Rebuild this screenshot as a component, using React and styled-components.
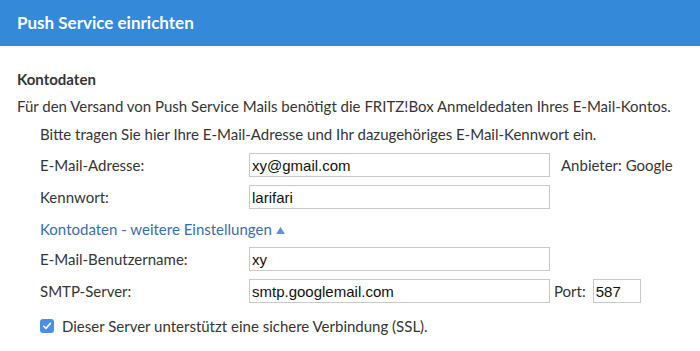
import React from "react";
import styled, { createGlobalStyle } from "styled-components";

const GlobalStyle = createGlobalStyle`
  body {
    margin: 0;
    background: #fff;
    font-family: "Lato", "Open Sans", sans-serif;
    color: #353535;
  }
`;

export default function App() {
  return (
    <>
      <GlobalStyle />
      <Page>
        <Header>Push Service einrichten</Header>
        <Content>
          <Title>Kontodaten</Title>
          <Text>
            Für den Versand von Push Service Mails benötigt die FRITZ!Box
            Anmeldedaten Ihres E-Mail-Kontos.
          </Text>
          <Indent>
            <Text>
              Bitte tragen Sie hier Ihre E-Mail-Adresse und Ihr dazugehöriges
              E-Mail-Kennwort ein.
            </Text>
            <Row>
              <Label>E-Mail-Adresse:</Label>
              <Input defaultValue="xy@gmail.com" />
              <After>Anbieter: Google</After>
            </Row>
            <Row>
              <Label>Kennwort:</Label>
              <Input defaultValue="larifari" />
            </Row>
            <Toggle>
              Kontodaten - weitere Einstellungen
              <Triangle viewBox="0 0 10 8">
                <path d="M5 0 L10 8 L0 8 Z" fill="#5b93d3" />
              </Triangle>
            </Toggle>
            <Row>
              <Label>E-Mail-Benutzername:</Label>
              <Input defaultValue="xy" />
            </Row>
            <Row>
              <Label>SMTP-Server:</Label>
              <Input defaultValue="smtp.googlemail.com" />
              <PortLabel>Port:</PortLabel>
              <Input $w={48} defaultValue="587" />
            </Row>
            <Check>
              <Box>
                <svg width="10" height="10" viewBox="0 0 10 10">
                  <path
                    d="M1.8 5.2 L4 7.4 L8.4 2.4"
                    fill="none"
                    stroke="#fff"
                    strokeWidth="1.6"
                    strokeLinecap="round"
                    strokeLinejoin="round"
                  />
                </svg>
              </Box>
              Dieser Server unterstützt eine sichere Verbindung (SSL).
            </Check>
          </Indent>
        </Content>
      </Page>
    </>
  );
}

/*===================== Styles =====================*/
const Page = styled.div`
  width: 700px;
  height: 351px;
  overflow: hidden;
`;

const Header = styled.div`
  height: 46px;
  background: #3589d9;
  color: #fff;
  font-size: 17px;
  font-weight: 700;
  line-height: 46px;
  padding-left: 17px;
`;

const Content = styled.div`
  padding: 22px 0 0 17px;
  font-size: 15px;
`;

const Title = styled.div`
  font-weight: 700;
  line-height: 22px;
  margin-bottom: 5px;
`;

const Text = styled.div`
  line-height: 22px;
`;

const Indent = styled.div`
  padding-left: 23px;
  padding-top: 6px;
  display: flex;
  flex-direction: column;
`;

const Row = styled.div`
  display: flex;
  align-items: center;
  height: 24px;
  margin-top: 8px;
`;

const Label = styled.div`
  width: 209px;
`;

const Input = styled.input`
  box-sizing: border-box;
  width: ${(p) => p.$w || 301}px;
  height: 24px;
  border: 1px solid #c9c9c9;
  padding: 0 2px;
  font-family: "Liberation Sans", Arial, sans-serif;
  font-size: 15px;
  color: #111;
  outline: none;
`;

const After = styled.div`
  margin-left: 11px;
`;

const PortLabel = styled.div`
  margin: 0 7px 0 4px;
`;

const Toggle = styled.div`
  display: flex;
  align-items: center;
  gap: 4px;
  color: #3b6daa;
  line-height: 22px;
  margin-top: 9px;
  margin-bottom: -1px;
`;

const Triangle = styled.svg`
  width: 9px;
  height: 7px;
  margin-top: 2px;
`;

const Check = styled.div`
  display: flex;
  align-items: center;
  gap: 8px;
  margin-top: 12px;
  line-height: 22px;
`;

const Box = styled.div`
  width: 14px;
  height: 14px;
  border-radius: 3px;
  background: #4a8fe4;
  display: flex;
  align-items: center;
  justify-content: center;
`;
